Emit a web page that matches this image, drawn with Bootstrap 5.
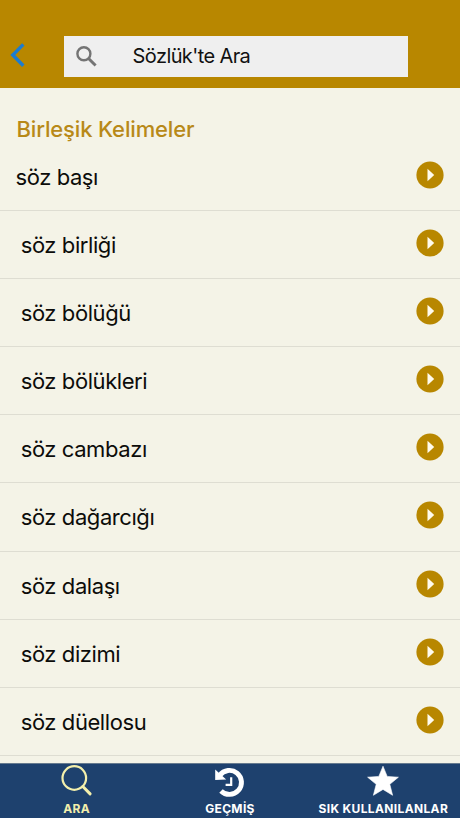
<!DOCTYPE html>
<html lang="tr">
<head>
<meta charset="utf-8">
<meta name="viewport" content="width=device-width, initial-scale=1">
<title>Sözlük</title>
<link href="https://cdn.jsdelivr.net/npm/bootstrap@5.3.0/dist/css/bootstrap.min.css" rel="stylesheet">
<style>
body{font-family:Inter,"Liberation Sans",sans-serif;background:#f4f3e7;color:#0c0c0a}
.app-top{background:#b88700;height:88px;padding:36px 52px 0 10px}
.back-btn{width:16px;height:26px;margin-top:6px;line-height:0}
.search-box{width:344.4px;height:41px;background:#efefef;padding-left:11px}
.search-text{font-size:20px;line-height:24px;letter-spacing:-.6px;margin:-1px 0 0 34px;color:#111}
.list-title{font-size:22px;line-height:28px;font-weight:500;letter-spacing:-.15px;color:#b88918;padding:27px 0 0 16.5px;height:54.9px}
.word-row{height:68.12px;border-bottom:1px solid #deddd2;padding:0 16px 0 20.7px}
.word-row.first-word{padding-left:15.5px}
.word-text{font-size:22px;line-height:28px;letter-spacing:-.42px;padding-top:1px}
.word-row svg{margin-top:-3px}
.app-tabs{height:55px;background:#1e416e;border-top:1px solid #667a8e;color:#fff}
.tab-item{width:153.33px;color:#fff}
.tab-item.current{color:#f3efac}
.tab-item svg{height:34px}
.tab-label{font-size:12px;line-height:16px;font-weight:700;letter-spacing:.35px;margin-top:3px;white-space:nowrap}
</style>
</head>
<body class="vh-100 d-flex flex-column overflow-hidden">
<svg class="d-none"><symbol id="go" viewBox="0 0 28 28"><circle cx="14" cy="14" r="13.6" fill="#b88700"/><path d="M11.5 7.7 18.2 14l-6.7 6.3z" fill="#fffbed"/></symbol></svg>
<header class="app-top d-flex justify-content-between flex-shrink-0">
  <a href="#" class="back-btn" aria-label="Geri"><svg width="16" height="26" viewBox="0 0 16 26" fill="none" stroke="#1b7cd2" stroke-width="3.4"><path d="M13.3 2.4 2.8 13l10.5 10.7"/></svg></a>
  <div class="search-box d-flex align-items-center">
    <svg width="24" height="24" viewBox="0 0 24 24" fill="none" stroke="#747474"><circle cx="8.9" cy="8.7" r="6.5" stroke-width="2.4"/><path d="m13.3 13.3 7.3 7.2" stroke-width="3"/></svg>
    <span class="search-text">Sözlük'te Ara</span>
  </div>
</header>
<main class="flex-grow-1 overflow-hidden">
  <h1 class="list-title mb-0">Birleşik Kelimeler</h1>
  <div>
    <div class="word-row first-word d-flex align-items-center justify-content-between"><span class="word-text">söz başı</span><svg width="28" height="28"><use href="#go"/></svg></div>
    <div class="word-row d-flex align-items-center justify-content-between"><span class="word-text">söz birliği</span><svg width="28" height="28"><use href="#go"/></svg></div>
    <div class="word-row d-flex align-items-center justify-content-between"><span class="word-text">söz bölüğü</span><svg width="28" height="28"><use href="#go"/></svg></div>
    <div class="word-row d-flex align-items-center justify-content-between"><span class="word-text">söz bölükleri</span><svg width="28" height="28"><use href="#go"/></svg></div>
    <div class="word-row d-flex align-items-center justify-content-between"><span class="word-text">söz cambazı</span><svg width="28" height="28"><use href="#go"/></svg></div>
    <div class="word-row d-flex align-items-center justify-content-between"><span class="word-text">söz dağarcığı</span><svg width="28" height="28"><use href="#go"/></svg></div>
    <div class="word-row d-flex align-items-center justify-content-between"><span class="word-text">söz dalaşı</span><svg width="28" height="28"><use href="#go"/></svg></div>
    <div class="word-row d-flex align-items-center justify-content-between"><span class="word-text">söz dizimi</span><svg width="28" height="28"><use href="#go"/></svg></div>
    <div class="word-row d-flex align-items-center justify-content-between"><span class="word-text">söz düellosu</span><svg width="28" height="28"><use href="#go"/></svg></div>
  </div>
</main>
<nav class="app-tabs d-flex flex-shrink-0">
  <a href="#" class="tab-item current d-flex flex-column align-items-center text-decoration-none">
    <svg width="32" height="34" viewBox="0 0 32 34" fill="none" stroke="currentColor"><circle cx="13.3" cy="14" r="11.8" stroke-width="2.2"/><path d="m21.8 22.5 7.3 7.4" stroke-width="3" stroke-linecap="round"/></svg>
    <span class="tab-label">ARA</span>
  </a>
  <a href="#" class="tab-item d-flex flex-column align-items-center text-decoration-none">
    <svg width="32" height="34" viewBox="0 0 32 34" fill="none" stroke="currentColor"><path d="M5.8 11.3A12 12 0 1 1 7 26.9" stroke-width="4.9"/><path d="M1.2 5.4V16l11-.4z" fill="currentColor" stroke="none"/><path d="M17.2 13.2v7.7h-5.6" stroke-width="2.2"/></svg>
    <span class="tab-label">GEÇMİŞ</span>
  </a>
  <a href="#" class="tab-item d-flex flex-column align-items-center text-decoration-none">
    <svg width="32" height="34" viewBox="0 0 32 34" fill="currentColor"><path d="m16 2.2 4.2 10.2 11.2.8-8.6 7.1 2.8 11L16 25.4l-9.6 5.9 2.8-11L.6 13.2l11.2-.8z" stroke="currentColor" stroke-width=".6" stroke-linejoin="round"/></svg>
    <span class="tab-label">SIK KULLANILANLAR</span>
  </a>
</nav>
<script src="https://cdn.jsdelivr.net/npm/bootstrap@5.3.0/dist/js/bootstrap.bundle.min.js"></script>
</body>
</html>
